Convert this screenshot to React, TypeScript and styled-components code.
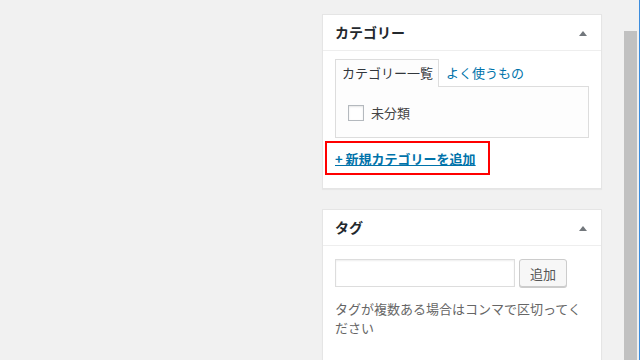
import { FC } from 'react';
import styled, { createGlobalStyle } from 'styled-components';

const GlobalStyle = createGlobalStyle`
    html, body {
        margin: 0;
        padding: 0;
        height: 100%;
        overflow: hidden;
        background: #f1f1f1;
    }
    body {
        font-family: 'Noto Sans CJK JP', 'Noto Sans', sans-serif;
        font-size: 13px;
        color: #444;
    }
`;

const Screen = styled.div`
    display: flex;
    width: 640px;
    height: 360px;
    overflow: hidden;
`;

const Main = styled.div`
    flex: 1;
    display: flex;
    justify-content: flex-end;
    padding: 14px 22px 0 0;
`;

const Sidebar = styled.div`
    width: 280px;
    display: flex;
    flex-direction: column;
    gap: 20px;
`;

const Postbox = styled.div<{ $tall?: boolean }>`
    background: #fff;
    border: 1px solid #e5e5e5;
    box-shadow: 0 1px 1px rgba(0, 0, 0, 0.04);
    min-height: ${(p) => (p.$tall ? '200px' : 'auto')};
`;

const Header = styled.div`
    display: flex;
    align-items: center;
    justify-content: space-between;
    height: 35px;
    padding: 0 14px 0 12px;
    border-bottom: 1px solid #eee;
`;

const Title = styled.h2`
    margin: 0;
    font-size: 14px;
    font-weight: 600;
    line-height: 19px;
    color: #23282d;
`;

const Toggle = styled.span`
    width: 0;
    height: 0;
    border-left: 4px solid transparent;
    border-right: 4px solid transparent;
    border-bottom: 5px solid #72777c;
    margin-top: 1px;
`;

const Inside = styled.div<{ $top: number; $bottom: number }>`
    padding: ${(p) => p.$top}px 12px ${(p) => p.$bottom}px;
`;

const Tabs = styled.ul`
    display: flex;
    margin: 0;
    padding: 0;
    list-style: none;
    position: relative;
    z-index: 1;
`;

const Tab = styled.li<{ $active?: boolean }>`
    box-sizing: border-box;
    height: 28px;
    padding: 3px 5px 5px 6px;
    margin-bottom: -1px;
    line-height: 19px;
    font-size: 13px;
    border: 1px solid ${(p) => (p.$active ? '#ddd' : 'transparent')};
    border-bottom: none;
    background: ${(p) => (p.$active ? '#fdfdfd' : 'transparent')};
    color: ${(p) => (p.$active ? '#32373c' : '#0073aa')};
`;

const TabPanel = styled.div`
    border: 1px solid #ddd;
    background: #fdfdfd;
    padding: 18px 12px 16px;
`;

const CheckRow = styled.label`
    display: flex;
    align-items: center;
    gap: 7px;
    height: 16px;
    line-height: 16px;
    color: #444;
`;

const Checkbox = styled.span`
    width: 16px;
    height: 16px;
    box-sizing: border-box;
    border: 1px solid #b4b9be;
    background: #fff;
    box-shadow: inset 0 1px 2px rgba(0, 0, 0, 0.1);
`;

const AddLinkFrame = styled.div`
    display: flex;
    align-items: center;
    width: 165px;
    height: 34px;
    box-sizing: border-box;
    margin: 3px 0 0 -10px;
    padding-left: 8px;
    border: 2px solid #ff0000;
`;

const AddLink = styled.a`
    color: #0073aa;
    font-size: 13px;
    font-weight: 600;
    text-decoration: underline;
    line-height: 19px;
`;

const TagRow = styled.div`
    display: flex;
    gap: 4px;
`;

const TagInput = styled.input`
    width: 180px;
    height: 28px;
    box-sizing: border-box;
    margin: 0;
    border: 1px solid #ddd;
    box-shadow: inset 0 1px 2px rgba(0, 0, 0, 0.07);
    background: #fff;
    font-family: inherit;
`;

const Button = styled.button`
    width: 48px;
    height: 28px;
    box-sizing: border-box;
    padding: 0;
    border: 1px solid #ccc;
    border-radius: 3px;
    background: #f7f7f7;
    box-shadow: 0 1px 0 #ccc;
    color: #555;
    font-family: inherit;
    font-size: 13px;
`;

const HelpText = styled.p`
    margin: 12px 0 0;
    color: #666;
    font-size: 13px;
    line-height: 19px;
`;

const ScrollTrack = styled.div`
    width: 15px;
    padding-top: 31px;
    box-sizing: border-box;
    background: #f1f1f1;
`;

const ScrollThumb = styled.div`
    width: 13px;
    height: 100%;
    background: #c1c1c1;
`;

const WindowEdge = styled.div`
    width: 1px;
    background: #3c8dde;
`;

const App: FC = () => {
    return (
        <Screen>
            <GlobalStyle />
            <Main>
                <Sidebar>
                    <Postbox>
                        <Header>
                            <Title>カテゴリー</Title>
                            <Toggle />
                        </Header>
                        <Inside $top={8} $bottom={13}>
                            <Tabs>
                                <Tab $active>カテゴリー一覧</Tab>
                                <Tab>よく使うもの</Tab>
                            </Tabs>
                            <TabPanel>
                                <CheckRow>
                                    <Checkbox />
                                    未分類
                                </CheckRow>
                            </TabPanel>
                            <AddLinkFrame>
                                <AddLink href="#">+ 新規カテゴリーを追加</AddLink>
                            </AddLinkFrame>
                        </Inside>
                    </Postbox>
                    <Postbox $tall>
                        <Header>
                            <Title>タグ</Title>
                            <Toggle />
                        </Header>
                        <Inside $top={13} $bottom={12}>
                            <TagRow>
                                <TagInput type="text" />
                                <Button>追加</Button>
                            </TagRow>
                            <HelpText>タグが複数ある場合はコンマで区切ってください</HelpText>
                        </Inside>
                    </Postbox>
                </Sidebar>
            </Main>
            <ScrollTrack>
                <ScrollThumb />
            </ScrollTrack>
            <WindowEdge />
        </Screen>
    );
};

export default App;
